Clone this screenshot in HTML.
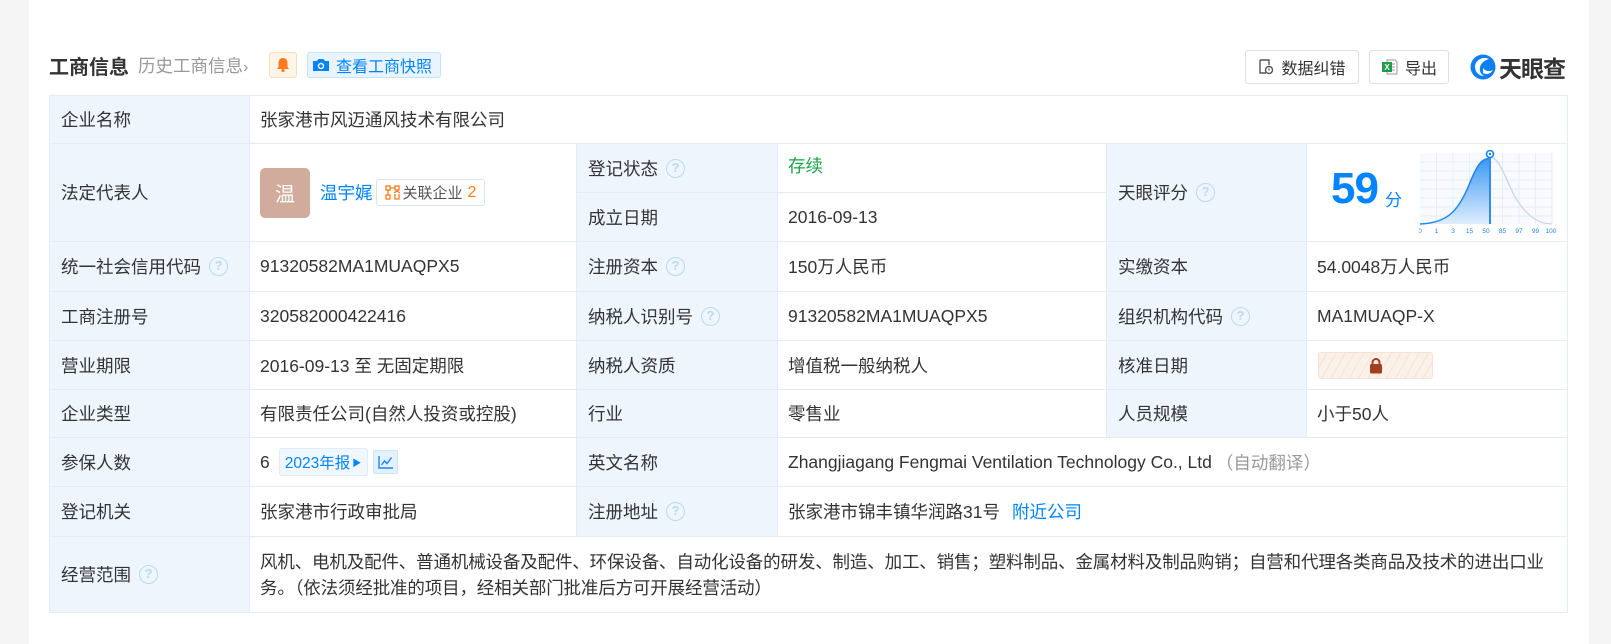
<!DOCTYPE html>
<html><head><meta charset="utf-8"><style>
*{margin:0;padding:0;box-sizing:border-box}
body{width:1611px;height:644px;background:#f5f5f5;font-family:"Liberation Sans","Noto Sans CJK SC",sans-serif;color:#333;position:relative;overflow:hidden;font-size:17.5px}
.card{position:absolute;left:29px;top:0;width:1560px;height:644px;background:#fff}
.a{position:absolute}
.c{position:absolute;border-right:1px solid #e4ecf6;border-bottom:1px solid #e4ecf6;display:flex;align-items:center;padding-left:10px;white-space:nowrap}
.l{background:#eef5fd;padding-left:11px}
.q{display:inline-block;width:19px;height:19px;border:1.5px solid #bcd8f2;border-radius:50%;color:#bcd8f2;font-size:13px;line-height:16px;text-align:center;margin-left:8px;font-weight:bold}
.btn{position:absolute;border:1px solid #dcdfe6;border-radius:3px;background:#fff;display:flex;align-items:center;justify-content:center;font-size:16px;color:#333}
</style></head><body>
<div class="card"></div>
<!-- header -->
<div class="a" style="left:49px;top:51px;font-size:20px;font-weight:bold;color:#333">工商信息</div>
<div class="a" style="left:138px;top:53px;font-size:17.5px;color:#999">历史工商信息<span style="font-size:16px">&#x203A;</span></div>
<div class="a" style="left:269px;top:52px;width:28px;height:26px;background:#fff4e8;border:1px solid #ffdcbc;border-radius:3px"><svg width="26" height="24" viewBox="0 0 26 24"><path d="M13 5c-3 0-4.5 2.3-4.5 5v4l-1.5 2h12l-1.5-2v-4c0-2.7-1.5-5-4.5-5z" fill="#ff7a1a"/><circle cx="13" cy="17.5" r="1.6" fill="#ff7a1a"/></svg></div>
<div class="a" style="left:307px;top:52px;width:134px;height:26px;background:#eaf4ff;border:1px solid #c6e1fb;border-radius:3px;display:flex;align-items:center;font-size:16px;color:#0084ff;padding-left:3px">
<svg width="20" height="18" viewBox="0 0 20 18" style="margin-right:5px"><path d="M2 5h4l1.5-2h5L14 5h4v10H2z" fill="#0084ff"/><circle cx="10" cy="10" r="3.2" fill="#fff"/><circle cx="10" cy="10" r="1.8" fill="#0084ff"/></svg>查看工商快照</div>
<div class="btn" style="left:1245px;top:50px;width:114px;height:34px"><svg width="16" height="18" viewBox="0 0 16 18" style="margin-right:7px"><path d="M2 2h9v5M2 2v13h6" fill="none" stroke="#555" stroke-width="1.4"/><circle cx="11" cy="12" r="3.5" fill="none" stroke="#555" stroke-width="1.4"/><path d="M11 10.5v2" stroke="#555" stroke-width="1.3"/></svg>数据纠错</div>
<div class="btn" style="left:1369px;top:50px;width:80px;height:34px"><svg width="18" height="18" viewBox="0 0 18 18" style="margin-right:6px"><path d="M6 2h8l2 2v12H6z" fill="#fff" stroke="#999"/><path d="M10 6h4M10 9h4M10 12h4" stroke="#999"/><rect x="1" y="4" width="10" height="10" fill="#1f9d4b"/><text x="6" y="12" font-size="8" fill="#fff" text-anchor="middle" font-family="Liberation Sans" font-weight="bold">X</text></svg>导出</div>
<div class="a" style="left:1469px;top:50px;display:flex;align-items:center">
<svg width="28" height="28" viewBox="0 0 28 28"><circle cx="14" cy="14" r="12.5" fill="#0c7ff2"/><path d="M20 6c-6-3-14 1-14 8 0 5 4 9 9 9-3-2-5-5-4-9 1-4 5-7 9-8z" fill="#fff"/><path d="M14 15c2 3 6 4 10 2-2 4-7 5-10 3z" fill="#fff"/></svg>
<span style="font-size:23px;font-weight:bold;color:#333;margin-left:2px;letter-spacing:-1px">天眼查</span></div>

<!-- table -->
<div class="a" style="left:49px;top:95px;width:1519px;height:518px;border-left:1px solid #e4ecf6;border-top:1px solid #e4ecf6"></div>
<div class="c l" style="left:49px;top:95px;width:201px;height:49px;border-left:1px solid #e4ecf6;border-top:1px solid #e4ecf6">企业名称</div>
<div class="c" style="left:250px;top:95px;width:1318px;height:49px;border-top:1px solid #e4ecf6">张家港市风迈通风技术有限公司</div>
<div class="c l" style="left:49px;top:144px;width:201px;height:98px;border-left:1px solid #e4ecf6">法定代表人</div>
<div class="c" style="left:250px;top:144px;width:327px;height:98px">
<div style="width:50px;height:50px;background:#d1ab9b;border-radius:5px;color:#fff;font-size:20px;display:flex;align-items:center;justify-content:center">温</div>
<span style="color:#0084ff;margin-left:10px">温宇娓</span>
<span style="margin-left:3px;border:1px solid #dde3ea;border-radius:3px;height:27px;padding:0 8px 0 8px;font-size:15px;color:#555;display:flex;align-items:center"><svg width="15" height="15" viewBox="0 0 15 15" style="margin-right:3px"><rect x="1" y="1" width="4" height="4" fill="none" stroke="#ff7a1a" stroke-width="1.3"/><rect x="10" y="1" width="4" height="4" fill="none" stroke="#ff7a1a" stroke-width="1.3"/><rect x="1" y="10" width="4" height="4" fill="none" stroke="#ff7a1a" stroke-width="1.3"/><path d="M5 3h5M3 5v5M9 8l3-2 3 2M10 9v5h4v-5" fill="none" stroke="#ff7a1a" stroke-width="1.3"/></svg>关联企业<span style="color:#ff7a1a;margin-left:5px;font-size:16px">2</span></span>
</div>
<div class="c l" style="left:577px;top:144px;width:201px;height:49px">登记状态<span class="q">?</span></div>
<div class="c" style="left:778px;top:144px;width:329px;height:49px;color:#1aa34a;align-items:flex-start;padding-top:9px">存续</div>
<div class="c l" style="left:577px;top:193px;width:201px;height:49px">成立日期</div>
<div class="c" style="left:778px;top:193px;width:329px;height:49px">2016-09-13</div>
<div class="c l" style="left:1107px;top:144px;width:200px;height:98px">天眼评分<span class="q">?</span></div>
<div class="c" style="left:1307px;top:144px;width:261px;height:98px"></div>
<div class="a" style="left:1331px;top:164px;font-size:44px;font-weight:bold;color:#0084ff;letter-spacing:-1px">59</div>
<div class="a" style="left:1385px;top:186px;font-size:17px;color:#0084ff">分</div>
<svg class="a" style="left:1419px;top:147px" width="140" height="92" viewBox="0 0 140 92">
<defs><linearGradient id="g" x1="0" y1="0" x2="0" y2="1"><stop offset="0" stop-color="#3d97f5"/><stop offset="1" stop-color="#dfeefd"/></linearGradient></defs>
<rect x="1" y="6" width="132" height="71" fill="#f8fafd"/>
<g stroke="#e8eef6" stroke-width="1">
<path d="M17.5 6v71M34 6v71M50.5 6v71M67 6v71M83.5 6v71M100 6v71M116.5 6v71M133 6v71"/>
<path d="M1 15h132M1 24h132M1 33h132M1 42h132M1 51h132M1 60h132M1 69h132"/>
</g>
<path d="M71 10C80 10 86 30 96 50C108 70 120 77 133 77" fill="none" stroke="#c8d7e8" stroke-width="1.3"/>
<path d="M1 77C30 76 40 62 50 38C58 18 62 12 71 11V77Z" fill="url(#g)"/>
<path d="M1 77C30 76 40 62 50 38C58 18 62 12 71 11" fill="none" stroke="#1a86f0" stroke-width="1.5"/>
<path d="M71 11V77" stroke="#2b8ef5" stroke-width="2"/>
<circle cx="71" cy="7" r="3.5" fill="#fff" stroke="#1a86f0" stroke-width="1.6"/><circle cx="71" cy="7" r="1.2" fill="#1a86f0"/>
<g font-size="6.5" fill="#1a86f0" font-family="Liberation Sans" text-anchor="middle">
<text x="1" y="86">0</text><text x="17.5" y="86">1</text><text x="34" y="86">3</text><text x="50.5" y="86">15</text><text x="67" y="86">50</text><text x="83.5" y="86">85</text><text x="100" y="86">97</text><text x="116.5" y="86">99</text><text x="132" y="86">100</text></g>
</svg>
<div class="c l" style="left:49px;top:242px;width:201px;height:50px;border-left:1px solid #e4ecf6">统一社会信用代码<span class="q">?</span></div>
<div class="c" style="left:250px;top:242px;width:327px;height:50px">91320582MA1MUAQPX5</div>
<div class="c l" style="left:577px;top:242px;width:201px;height:50px">注册资本<span class="q">?</span></div>
<div class="c" style="left:778px;top:242px;width:329px;height:50px">150万人民币</div>
<div class="c l" style="left:1107px;top:242px;width:200px;height:50px">实缴资本</div>
<div class="c" style="left:1307px;top:242px;width:261px;height:50px">54.0048万人民币</div>
<div class="c l" style="left:49px;top:292px;width:201px;height:49px;border-left:1px solid #e4ecf6">工商注册号</div>
<div class="c" style="left:250px;top:292px;width:327px;height:49px">320582000422416</div>
<div class="c l" style="left:577px;top:292px;width:201px;height:49px">纳税人识别号<span class="q">?</span></div>
<div class="c" style="left:778px;top:292px;width:329px;height:49px">91320582MA1MUAQPX5</div>
<div class="c l" style="left:1107px;top:292px;width:200px;height:49px">组织机构代码<span class="q">?</span></div>
<div class="c" style="left:1307px;top:292px;width:261px;height:49px">MA1MUAQP-X</div>
<div class="c l" style="left:49px;top:341px;width:201px;height:49px;border-left:1px solid #e4ecf6">营业期限</div>
<div class="c" style="left:250px;top:341px;width:327px;height:49px">2016-09-13 至 无固定期限</div>
<div class="c l" style="left:577px;top:341px;width:201px;height:49px">纳税人资质</div>
<div class="c" style="left:778px;top:341px;width:329px;height:49px">增值税一般纳税人</div>
<div class="c l" style="left:1107px;top:341px;width:200px;height:49px">核准日期</div>
<div class="c" style="left:1307px;top:341px;width:261px;height:49px"></div>
<div class="a" style="left:1318px;top:352px;width:115px;height:27px;border:1px solid #f6e3d3;border-radius:3px;background:repeating-linear-gradient(-60deg,#fbf1e8 0 7px,#f4e4d6 7px 8px);display:flex;align-items:center;justify-content:center">
<svg width="16" height="17" viewBox="0 0 16 17"><path d="M4.5 8V5.5a3.5 3.5 0 0 1 7 0V8" fill="none" stroke="#a13f22" stroke-width="2"/><rect x="2" y="7" width="12" height="9.5" rx="1.5" fill="#a13f22"/></svg></div>
<div class="c l" style="left:49px;top:390px;width:201px;height:48px;border-left:1px solid #e4ecf6">企业类型</div>
<div class="c" style="left:250px;top:390px;width:327px;height:48px">有限责任公司(自然人投资或控股)</div>
<div class="c l" style="left:577px;top:390px;width:201px;height:48px">行业</div>
<div class="c" style="left:778px;top:390px;width:329px;height:48px">零售业</div>
<div class="c l" style="left:1107px;top:390px;width:200px;height:48px">人员规模</div>
<div class="c" style="left:1307px;top:390px;width:261px;height:48px">小于50人</div>
<div class="c l" style="left:49px;top:438px;width:201px;height:49px;border-left:1px solid #e4ecf6">参保人数</div>
<div class="c" style="left:250px;top:438px;width:327px;height:49px">6
<span style="margin-left:9px;height:28px;background:#f0f7ff;border:1px solid #deecfb;border-radius:3px;color:#0084ff;font-size:15.5px;display:flex;align-items:center;padding:0 6px 0 5px">2023年报<span style="font-size:9px;margin-left:2px">&#x25B6;</span></span>
<span style="margin-left:5px;width:25px;height:24px;background:#e3f0fd;border:1px solid #cfe4fa;border-radius:2px;display:flex;align-items:center;justify-content:center"><svg width="16" height="14" viewBox="0 0 16 14"><path d="M1 1v12h14" fill="none" stroke="#1a86f0" stroke-width="1.4"/><path d="M3.5 10l3-4 2.5 2.5 4.5-6" fill="none" stroke="#1a86f0" stroke-width="1.4"/></svg></span></div>
<div class="c l" style="left:577px;top:438px;width:201px;height:49px">英文名称</div>
<div class="c" style="left:778px;top:438px;width:790px;height:49px">Zhangjiagang Fengmai Ventilation Technology Co., Ltd<span style="color:#999;margin-left:4px">（自动翻译）</span></div>
<div class="c l" style="left:49px;top:487px;width:201px;height:50px;border-left:1px solid #e4ecf6">登记机关</div>
<div class="c" style="left:250px;top:487px;width:327px;height:50px">张家港市行政审批局</div>
<div class="c l" style="left:577px;top:487px;width:201px;height:50px">注册地址<span class="q">?</span></div>
<div class="c" style="left:778px;top:487px;width:790px;height:50px">张家港市锦丰镇华润路31号<span style="color:#0084ff;margin-left:12px">附近公司</span></div>
<div class="c l" style="left:49px;top:537px;width:201px;height:76px;border-left:1px solid #e4ecf6">经营范围<span class="q">?</span></div>
<div class="c" style="left:250px;top:537px;width:1318px;height:76px;white-space:normal;line-height:26px;padding-right:2px;letter-spacing:-0.15px">风机、电机及配件、普通机械设备及配件、环保设备、自动化设备的研发、制造、加工、销售；塑料制品、金属材料及制品购销；自营和代理各类商品及技术的进出口业务。（依法须经批准的项目，经相关部门批准后方可开展经营活动）</div>
</body></html>
